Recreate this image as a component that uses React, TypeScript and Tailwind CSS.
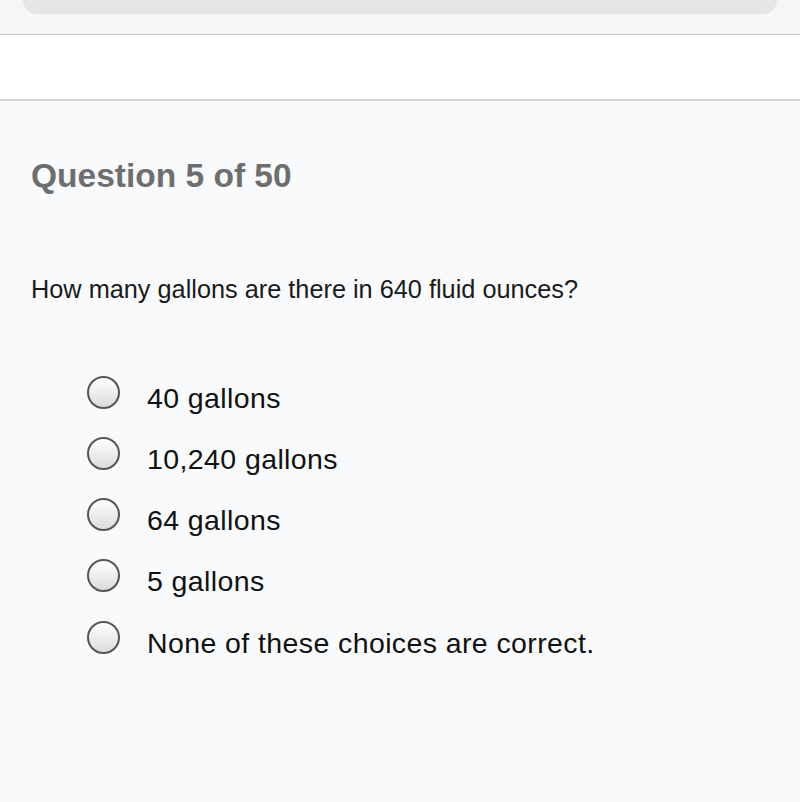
import React from "react";

const options = [
  "40 gallons",
  "10,240 gallons",
  "64 gallons",
  "5 gallons",
  "None of these choices are correct.",
];

export default function App() {
  return (
    <div
      className="w-[800px] h-[802px] flex flex-col bg-[#f9fafc] overflow-hidden"
      style={{ fontFamily: '"Liberation Sans", Arial, sans-serif' }}
    >
      <div className="h-[35px] bg-[#f6f6f6] border-b border-[#c9c9c9] px-[23px] shrink-0">
        <div className="h-[14px] bg-[#e4e5e7] rounded-b-[16px]" />
      </div>
      <div className="h-[66px] bg-white border-b-2 border-[#d3d3d3] shrink-0" />
      <div className="flex flex-col px-[31px]">
        <h1 className="mt-[55px] text-[33.5px] leading-[40px] font-bold text-[#6e6e6e]">
          Question 5 of 50
        </h1>
        <p className="mt-[79px] text-[25.3px] leading-[28px] text-[#1a1a1a]">
          How many gallons are there in 640 fluid ounces?
        </p>
        <div className="mt-[70px] flex flex-col gap-[28.3px] pl-[56px]">
          {options.map((o) => (
            <div key={o} className="flex items-center h-[33px]">
              <div className="w-[33px] h-[33px] rounded-full border-2 border-[#555] bg-gradient-to-b from-white to-[#dcdcdc] shrink-0 mt-[5px]" />
              <span className="ml-[27px] text-[28.5px] tracking-[0.4px] leading-[33px] text-[#111] mt-[17px]">{o}</span>
            </div>
          ))}
        </div>
      </div>
    </div>
  );
}
